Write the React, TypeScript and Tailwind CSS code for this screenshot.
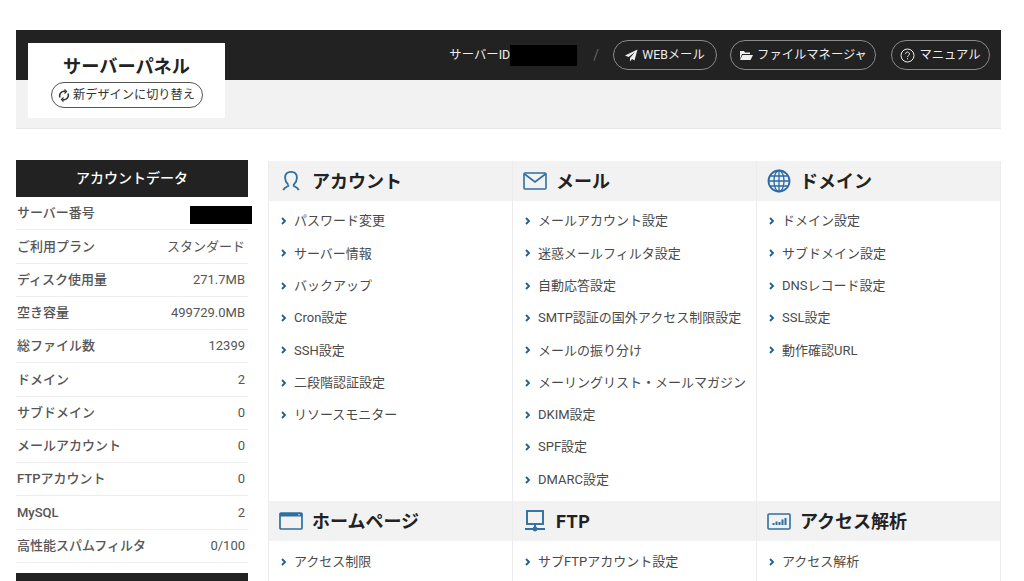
import React from "react";

const FONT = "font-['Roboto','Noto_Sans_CJK_JP',sans-serif]";

const rows: [string, string][] = [
  ["サーバー番号", ""],
  ["ご利用プラン", "スタンダード"],
  ["ディスク使用量", "271.7MB"],
  ["空き容量", "499729.0MB"],
  ["総ファイル数", "12399"],
  ["ドメイン", "2"],
  ["サブドメイン", "0"],
  ["メールアカウント", "0"],
  ["FTPアカウント", "0"],
  ["MySQL", "2"],
  ["高性能スパムフィルタ", "0/100"],
];

const BLUE = "#2f6f9f";

function Chevron() {
  return (
    <svg width="6" height="8" viewBox="0 0 6 8" className="shrink-0">
      <path d="M1 1l3 3-3 3" fill="none" stroke="#1f5f8f" strokeWidth="1.8" />
    </svg>
  );
}

const UserIcon = () => (
  <svg width="20" height="22" viewBox="0 0 22 24" fill="none" stroke={BLUE} strokeWidth="2">
    <path d="M8 16c-1-1-3.500-3-3.500-7.500C4.500 4.500 7 2 11 2s6.500 2.500 6.500 6.500c0 4.500-2.500 6.500-3.500 7.500v1.500c2 1 4.500 1.500 5.500 4.500M8 16v1.500c-2 1-4.500 1.500-5.500 4.500" />
  </svg>
);
const MailIcon = () => (
  <svg width="24" height="18" viewBox="0 0 24 18" fill="none" stroke={BLUE} strokeWidth="1.6">
    <rect x="1" y="1" width="22" height="16" rx="1" />
    <path d="M1.500 2l10.500 8 10.500-8" />
  </svg>
);
const GlobeIcon = () => (
  <svg width="24" height="24" viewBox="0 0 24 24" fill="none" stroke="#2a6aa8" strokeWidth="1.300">
    <circle cx="12" cy="12" r="10.500" strokeWidth="1.800" />
    <ellipse cx="12" cy="12" rx="5" ry="10.500" />
    <path d="M12 1.500v21M1.500 12h21M3 7h18M3 17h18" />
  </svg>
);
const WindowIcon = () => (
  <svg width="24" height="18" viewBox="0 0 24 18" fill="none">
    <rect x="1" y="1" width="22" height="16" rx="1" stroke={BLUE} strokeWidth="1.700" />
    <rect x="1" y="1" width="22" height="3.500" fill={BLUE} />
    <circle cx="20" cy="2.700" r="0.700" fill="#fff" />
  </svg>
);
const FtpIcon = () => (
  <svg width="20" height="22" viewBox="0 0 20 22" fill="none" stroke={BLUE} strokeWidth="1.900">
    <rect x="2" y="1" width="16" height="13" />
    <path d="M10 14v5M0 19h20" />
    <circle cx="10" cy="19" r="1.500" fill={BLUE} />
  </svg>
);
const ChartIcon = () => (
  <svg width="24" height="17" viewBox="0 0 24 17" fill="none">
    <rect x="1" y="1" width="22" height="15" rx="1" stroke={BLUE} strokeWidth="1.600" />
    <path d="M6.500 12v-2M9.500 12v-3.500M12.500 12v-3M15.500 12v-5.500M18.500 12v-7" stroke={BLUE} strokeWidth="2" />
  </svg>
);

function Section({
  icon,
  title,
  items,
  wide,
  last,
  low,
}: {
  icon: React.ReactNode;
  title: string;
  items: string[];
  wide?: boolean;
  last?: boolean;
  low?: boolean;
}) {
  return (
    <div className={`border-l border-[#ececec] ${last ? "border-r" : ""} flex flex-col`}>
      <div className="h-10 bg-[#f2f2f2] flex items-center pl-[10px]">
        <span className="w-[24px] flex justify-center shrink-0">{icon}</span>
        <span className={`ml-[9px] text-[18px] font-bold text-[#222] ${wide ? "tracking-[0.5px]" : ""}`}>{title}</span>
      </div>
      <ul className={low ? "pt-[5px]" : "pt-[4px]"}>
        {items.map((t) => (
          <li key={t} className="h-[32.300px] flex items-center gap-[7px] pl-[12px] text-[13px] text-[#4a4a4a] whitespace-nowrap">
            <Chevron />
            <span>{t}</span>
          </li>
        ))}
      </ul>
    </div>
  );
}

function Pill({ icon, label, w }: { icon: React.ReactNode; label: string; w: string }) {
  return (
    <div className={`h-[30px] ${w} rounded-full border border-[#8a8a8a] flex items-center justify-center gap-[4px] text-[12.300px] text-[#eee] whitespace-nowrap`}>
      {icon}
      <span>{label}</span>
    </div>
  );
}

export default function App() {
  return (
    <div className={`${FONT} w-[1024px] h-[581px] overflow-hidden bg-white pt-[30px] px-[16px]`}>
      <header className="relative w-[985px]">
        <div className="h-[50px] bg-[#222222] flex items-center justify-end pr-[11px]">
          <span className="text-[12.400px] text-[#eee]">サーバーID</span>
          <span className="w-[67px] h-[21px] bg-black" />
          <span className="ml-[16px] mr-[14px] text-[14px] text-[#666]">/</span>
          <Pill
            w="w-[104px]"
            label="WEBメール"
            icon={
              <svg width="13" height="13" viewBox="0 0 13 13" fill="#eee">
                <path d="M12.500.500L0 6.500l3.500 1.500L10 3 5 9v3.500l2-2.500 2.500 1.500z" />
              </svg>
            }
          />
          <span className="w-[13px]" />
          <Pill
            w="w-[146px]"
            label="ファイルマネージャ"
            icon={
              <svg width="14" height="12" viewBox="0 0 14 12" fill="#eee">
                <path d="M1 2h4l1 1.500h5V5H3L1 10zM3.500 6H14l-2.500 5H1z" />
              </svg>
            }
          />
          <span className="w-[15px]" />
          <Pill
            w="w-[99px]"
            label="マニュアル"
            icon={
              <svg width="15" height="15" viewBox="0 0 15 15" fill="none" stroke="#eee">
                <circle cx="7.500" cy="7.500" r="6.500" />
                <path d="M5.500 6c0-1.200 1-2 2-2s2 .8 2 1.900c0 1.500-2 1.500-2 3.100M7.500 10.300v1" />
              </svg>
            }
          />
        </div>
        <div className="h-[49px] bg-[#f2f2f2] border-b border-[#e8e8e8]" />
        <div className="absolute left-[12px] top-[13px] w-[197px] h-[75px] bg-white flex flex-col items-center pt-[11px]">
          <div className="text-[18.200px] leading-[26px] font-bold text-[#222]">サーバーパネル</div>
          <div className="mt-[2px] w-[152px] h-[26px] rounded-full border border-[#555] flex items-center justify-center gap-[3px] text-[12.200px] text-[#333] whitespace-nowrap">
            <svg width="12" height="13" viewBox="0 0 12 13" fill="none" stroke="#333" strokeWidth="1.500">
              <path d="M2 8.500A4.500 4.500 0 0 1 7.500 2.500M10 4.500A4.500 4.500 0 0 1 4.500 10.500" />
              <path d="M6.500.500l2 2-2 2M5.500 8.500l-2 2 2 2" strokeWidth="1.200" />
            </svg>
            <span>新デザインに切り替え</span>
          </div>
        </div>
      </header>

      <div className="mt-[31px] flex items-start gap-[20px]">
        <aside className="w-[232px] shrink-0">
          <div className="h-[37px] bg-[#222222] text-white text-[14px] font-medium flex items-center justify-center">
            アカウントデータ
          </div>
          <dl>
            {rows.map(([k, v], i) => (
              <div
                key={k}
                className="relative h-[33.250px] border-b border-[#eeeeee] flex items-center justify-between pl-px pr-[3px] text-[13px] text-[#555]"
              >
                <dt className="font-medium">{k}</dt>
                <dd>{v}</dd>
                {i === 0 && <span className="absolute left-[174px] top-[9px] w-[62px] h-[18px] bg-black" />}
              </div>
            ))}
          </dl>
          <div className="mt-[10px] h-[37px] bg-[#222222]" />
        </aside>

        <main className="w-[733px] grid grid-cols-[244px_244px_245px] grid-rows-[340px_100px] mt-[1px]">
          <Section
            icon={<UserIcon />}
            title="アカウント"
            items={["パスワード変更", "サーバー情報", "バックアップ", "Cron設定", "SSH設定", "二段階認証設定", "リソースモニター"]}
          />
          <Section
            icon={<MailIcon />}
            title="メール"
            items={[
              "メールアカウント設定",
              "迷惑メールフィルタ設定",
              "自動応答設定",
              "SMTP認証の国外アクセス制限設定",
              "メールの振り分け",
              "メーリングリスト・メールマガジン",
              "DKIM設定",
              "SPF設定",
              "DMARC設定",
            ]}
          />
          <Section
            last
            icon={<GlobeIcon />}
            title="ドメイン"
            items={["ドメイン設定", "サブドメイン設定", "DNSレコード設定", "SSL設定", "動作確認URL"]}
          />
          <Section low icon={<WindowIcon />} title="ホームページ" items={["アクセス制限"]} />
          <Section low wide icon={<FtpIcon />} title="FTP" items={["サブFTPアカウント設定"]} />
          <Section low last icon={<ChartIcon />} title="アクセス解析" items={["アクセス解析"]} />
        </main>
      </div>
    </div>
  );
}
